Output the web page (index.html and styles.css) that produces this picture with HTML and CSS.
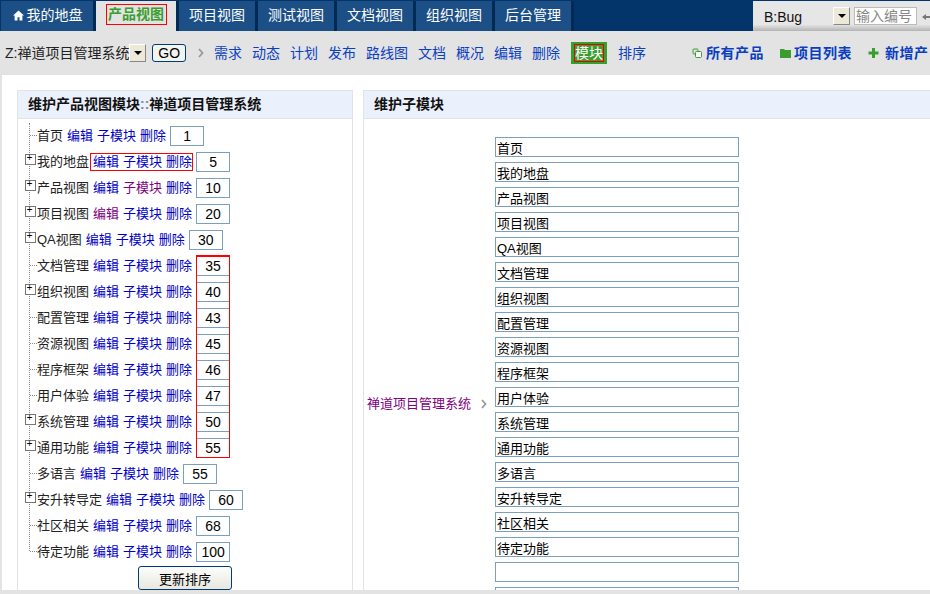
FILE: index.html
```html
<!DOCTYPE html>
<html lang="zh">
<head>
<meta charset="utf-8">
<title>维护产品视图模块</title>
<link rel="stylesheet" href="styles.css">
</head>
<body>
<header class="topbar">
  <nav class="tabs">
    <a class="tab tab-home"><svg class="home" viewBox="0 0 11 11"><path d="M5.500 0.500 0 5.500h1.600V10.500h2.900V7.200h2V10.500h2.900V5.500H11z" fill="#fff"/></svg>我的地盘</a>
    <a class="tab tab-active"><span class="mark">产品视图</span></a>
    <a class="tab">项目视图</a>
    <a class="tab">测试视图</a>
    <a class="tab">文档视图</a>
    <a class="tab">组织视图</a>
    <a class="tab">后台管理</a>
  </nav>
  <div class="search">
    <div class="fake-select"><span class="fake-value">B:Bug</span><span class="arrow-btn"><i></i></span></div>
    <input class="search-input" placeholder="输入编号">
    <svg class="go-arrow" viewBox="0 0 8 8"><path d="M0 4 4 1v2h4v2H4v2z" fill="#777"/></svg>
  </div>
</header>
<div class="subbar">
  <div class="product-pick">
    <span class="product-name">Z:禅道项目管理系统</span><span class="arrow-btn"><i></i></span>
    <button class="go">GO</button>
  </div>
  <svg class="chev" viewBox="0 0 6 10"><path d="M1 1l3.500 4L1 9" fill="none" stroke="#999" stroke-width="1.800"/></svg>
  <div class="sub-links">
    <a>需求</a><a>动态</a><a>计划</a><a>发布</a><a>路线图</a><a>文档</a><a>概况</a><a>编辑</a><a>删除</a><a class="sub-on"><span>模块</span></a><a>排序</a>
  </div>
  <div class="sub-actions">
    <a><svg viewBox="0 0 11 10"><rect x="1" y="1" width="5" height="5" rx="1" fill="none" stroke="#3a9e2f"/><rect x="3.500" y="3.500" width="6" height="6" rx="1" fill="#fff" stroke="#3a9e2f"/></svg>所有产品</a>
    <a><svg viewBox="0 0 11 10"><path d="M0 1h4l1 1h6v8H0z" fill="#3a9e2f"/></svg>项目列表</a>
    <a><svg class="add-icon" viewBox="0 0 10 10"><path d="M3.500 0h3v3.500H10v3H6.500V10h-3V6.500H0v-3h3.500z" fill="#3a9e2f"/></svg>新增产</a>
  </div>
</div>
<main class="content">
  <section class="panel panel-left">
    <h2 class="panel-title">维护产品视图模块<span class="colons">::</span>禅道项目管理系统</h2>
    <div class="tree-wrap">
      <ul class="tree">
        <li class="node"><span class="name">首页</span><a>编辑</a><a>子模块</a><a>删除</a><input class="order" value="1"></li>
        <li class="node plus"><span class="name">我的地盘</span><span class="red-links"><a>编辑</a><a>子模块</a><a>删除</a></span><input class="order" value="5"></li>
        <li class="node plus"><span class="name">产品视图</span><a>编辑</a><a class="seen">子模块</a><a>删除</a><input class="order" value="10"></li>
        <li class="node plus"><span class="name">项目视图</span><a class="seen">编辑</a><a>子模块</a><a>删除</a><input class="order" value="20"></li>
        <li class="node plus"><span class="name">QA视图</span><a>编辑</a><a>子模块</a><a>删除</a><input class="order" value="30"></li>
        <li class="node"><span class="name">文档管理</span><a>编辑</a><a>子模块</a><a>删除</a><input class="order" value="35"></li>
        <li class="node plus"><span class="name">组织视图</span><a>编辑</a><a>子模块</a><a>删除</a><input class="order" value="40"></li>
        <li class="node"><span class="name">配置管理</span><a>编辑</a><a>子模块</a><a>删除</a><input class="order" value="43"></li>
        <li class="node"><span class="name">资源视图</span><a>编辑</a><a>子模块</a><a>删除</a><input class="order" value="45"></li>
        <li class="node"><span class="name">程序框架</span><a>编辑</a><a>子模块</a><a>删除</a><input class="order" value="46"></li>
        <li class="node"><span class="name">用户体验</span><a>编辑</a><a>子模块</a><a>删除</a><input class="order" value="47"></li>
        <li class="node plus"><span class="name">系统管理</span><a>编辑</a><a>子模块</a><a>删除</a><input class="order" value="50"></li>
        <li class="node plus"><span class="name">通用功能</span><a>编辑</a><a>子模块</a><a>删除</a><input class="order" value="55"></li>
        <li class="node"><span class="name">多语言</span><a>编辑</a><a>子模块</a><a>删除</a><input class="order" value="55"></li>
        <li class="node plus"><span class="name">安升转导定</span><a>编辑</a><a>子模块</a><a>删除</a><input class="order" value="60"></li>
        <li class="node"><span class="name">社区相关</span><a>编辑</a><a>子模块</a><a>删除</a><input class="order" value="68"></li>
        <li class="node last"><span class="name">待定功能</span><a>编辑</a><a>子模块</a><a>删除</a><input class="order" value="100"></li>
      </ul>
      <div class="update-row"><button class="update">更新排序</button></div>
      <div class="red-column"></div>
    </div>
  </section>
  <section class="panel panel-right">
    <h2 class="panel-title">维护子模块</h2>
    <div class="sub-form">
      <div class="crumb"><a class="seen">禅道项目管理系统</a><svg class="chev-sm" viewBox="0 0 6 10"><path d="M1 1l3.500 4L1 9" fill="none" stroke="#999" stroke-width="1.800"/></svg></div>
      <div class="names">
        <input class="name-input" value="首页">
        <input class="name-input" value="我的地盘">
        <input class="name-input" value="产品视图">
        <input class="name-input" value="项目视图">
        <input class="name-input" value="QA视图">
        <input class="name-input" value="文档管理">
        <input class="name-input" value="组织视图">
        <input class="name-input" value="配置管理">
        <input class="name-input" value="资源视图">
        <input class="name-input" value="程序框架">
        <input class="name-input" value="用户体验">
        <input class="name-input" value="系统管理">
        <input class="name-input" value="通用功能">
        <input class="name-input" value="多语言">
        <input class="name-input" value="安升转导定">
        <input class="name-input" value="社区相关">
        <input class="name-input" value="待定功能">
        <input class="name-input" value="">
        <input class="name-input" value="">
        <input class="name-input" value="">
        <input class="name-input" value="">
      </div>
    </div>
  </section>
</main>
```

FILE: styles.css
```css
* { box-sizing: border-box; }
html, body { margin: 0; height: 594px; overflow: hidden; }
body {
  width: 930px;
  background: #e3e3e3;
  font: 13px/18px "Liberation Sans", "Noto Sans CJK SC", sans-serif;
  color: #222;
}
a { cursor: pointer; }
input, button { font-family: inherit; margin: 0; }

.topbar {
  height: 31px;
  background: #03356b;
  display: flex;
  justify-content: space-between;
  padding-top: 1px;
}
.tabs { display: flex; padding-left: 1px; }
.tab {
  width: 79px;
  height: 30px;
  background: #1b4f85;
  border-right: 3px solid #012a55;
  color: #fff;
  font-size: 14px;
  line-height: 28px;
  text-align: center;
  white-space: nowrap;
}
.tab-home { width: 95px; padding-left: 1px; }
.tab-active {
  width: 83px;
  background: #e3e3e3;
  color: #3a9e2f;
  font-weight: 700;
  padding-top: 3px;
}
.mark { display: block; width: 61px; height: 21px; margin: 0 auto; border: 1px solid #f00; white-space: nowrap; line-height: 19px; }
.home { width: 11px; height: 11px; margin-right: 3px; vertical-align: -1px; }

.search {
  width: 177px;
  height: 30px;
  background: linear-gradient(#e6e6e6 0, #e6e6e6 78%, #b4b4b4 100%);
  display: flex;
  align-items: flex-start;
  padding: 6px 0 0 2px;
  overflow: hidden;
  flex: none;
}
.fake-select { width: 96px; height: 18px; display: flex; justify-content: space-between; }
.fake-value { padding-left: 9px; font-size: 14px; color: #111; line-height: 20px; }
.arrow-btn {
  width: 17px;
  height: 18px;
  background: #ece9d8;
  border: 1px solid;
  border-color: #fff #888 #888 #fff;
  display: flex;
  align-items: center;
  justify-content: center;
  flex: none;
}
.arrow-btn i { border: 4px solid transparent; border-top: 4px solid #000; border-bottom: 0; display: block; }
.search-input {
  width: 63px;
  height: 18px;
  margin-left: 4px;
  padding: 0 1px;
  border: 1px solid #bbb;
  background: #fff;
  font-size: 14px;
}
.search-input::placeholder { color: #888; opacity: 1; }
.go-arrow { width: 8px; height: 8px; margin: 6px 0 0 5px; flex: none; }

.subbar {
  height: 43px;
  background: #e3e3e3;
  display: flex;
  align-items: center;
  white-space: nowrap;
  padding-left: 5px;
  font-size: 14px;
  overflow: hidden;
}
.product-pick { display: flex; align-items: center; width: 181px; flex: none; }
.product-name { color: #222; }
.go {
  width: 34px;
  height: 18px;
  margin-left: 6px;
  padding: 0;
  background: #f4f4ee;
  border: 1px solid #003c74;
  border-radius: 3px;
  font-size: 14px;
  line-height: 14px;
  color: #000;
}
.chev { width: 6px; height: 10px; margin-left: 12px; flex: none; }
.sub-links { display: flex; align-items: center; gap: 10px; margin-left: 10px; flex: none; }
.sub-links a { color: #0a3fc2; }
.sub-links .sub-on {
  background: #3a9e2f;
  padding: 2px 3px;
  color: #fff;
  margin: 0 1px;
}
.sub-on span { display: block; border: 1px solid #e00; width: 30px; height: 18px; text-align: center; line-height: 16px; }
.sub-actions { display: flex; gap: 16px; margin-left: 46px; flex: none; font-weight: 700; }
.sub-actions a { color: #0a3fc2; display: flex; align-items: center; gap: 3px; letter-spacing: .5px; }
.sub-actions svg { width: 11px; height: 10px; }
.sub-actions .add-icon { margin-right: 3px; }

.content {
  margin-top: 1px;
  margin-left: 2px;
  height: 515px;
  background: #fff;
  padding-top: 15px;
  display: flex;
  gap: 10px;
  overflow: hidden;
}
.panel { border: 1px solid #e3e3e3; border-bottom: 0; background: #fff; flex: none; }
.panel-left { width: 336px; margin-left: 15px; }
.panel-right { width: 600px; }
.panel-title {
  margin: 0;
  height: 28px;
  background: #ebf1fc;
  border-bottom: 1px solid #e3e3e3;
  padding-left: 10px;
  font-size: 14px;
  line-height: 27px;
  font-weight: 700;
  color: #111;
  white-space: nowrap;
}
.colons { color: #888; }

.tree-wrap { position: relative; padding-top: 4px; }
.tree { list-style: none; margin: 0 0 1px 11px; padding: 0; border-left: 1px dotted #888; }
.node {
  position: relative;
  height: 26px;
  display: flex;
  align-items: center;
  padding-left: 7px;
  white-space: nowrap;
}
.node::before { content: ""; position: absolute; left: 0; top: 12px; width: 7px; border-top: 1px dotted #888; }
.node.plus::before {
  left: -5px;
  top: 5px;
  width: 9px;
  height: 9px;
  background: #fff;
  border: 1px solid #777;
}
.node.plus::after {
  content: "+";
  position: absolute;
  left: -5px;
  top: 5px;
  width: 9px;
  height: 9px;
  font: 10px/9px "Liberation Mono", monospace;
  text-align: center;
  color: #000;
}
.node.last::after { content: ""; position: absolute; left: -1px; top: 13px; bottom: 0; width: 1px; background: #fff; }
.name { margin-right: 4px; color: #222; }
.node a { color: #0000c8; margin-right: 4px; }
.node a.seen, .seen { color: #800080; }
.red-links { display: flex; height: 18px; align-items: center; border: 1px solid #f00; margin: 0 3px 0 -3px; padding-left: 2px; }
.node .red-links a:last-child { margin-right: 0; }
.order {
  width: 34px;
  height: 20px;
  padding: 0;
  border: 1px solid #7c9fbd;
  text-align: center;
  font-size: 14px;
  color: #000;
  background: #fff;
}
.red-column {
  position: absolute;
  left: 178px;
  top: 136px;
  width: 34px;
  height: 203px;
  border: 1px solid #f00;
  border-top-width: 2px;
  pointer-events: none;
}
.update-row { display: flex; justify-content: center; }
.update {
  width: 94px;
  height: 24px;
  padding: 0;
  background: linear-gradient(#fdfdfb, #e8e8e0);
  border: 1px solid #003c74;
  border-radius: 3px;
  font-size: 13px;
  color: #000;
}

.sub-form { display: flex; align-items: center; padding-top: 18px; }
.crumb { width: 131px; display: flex; align-items: center; gap: 10px; white-space: nowrap; padding-left: 3px; flex: none; }
.chev-sm { width: 6px; height: 10px; flex: none; }
.names { display: flex; flex-direction: column; gap: 5px; padding-bottom: 14px; }
.name-input {
  width: 244px;
  height: 20px;
  padding: 0 1px;
  border: 1px solid #7c9fbd;
  background: #fff;
  font-size: 13px;
  color: #000;
  flex: none;
}
```
